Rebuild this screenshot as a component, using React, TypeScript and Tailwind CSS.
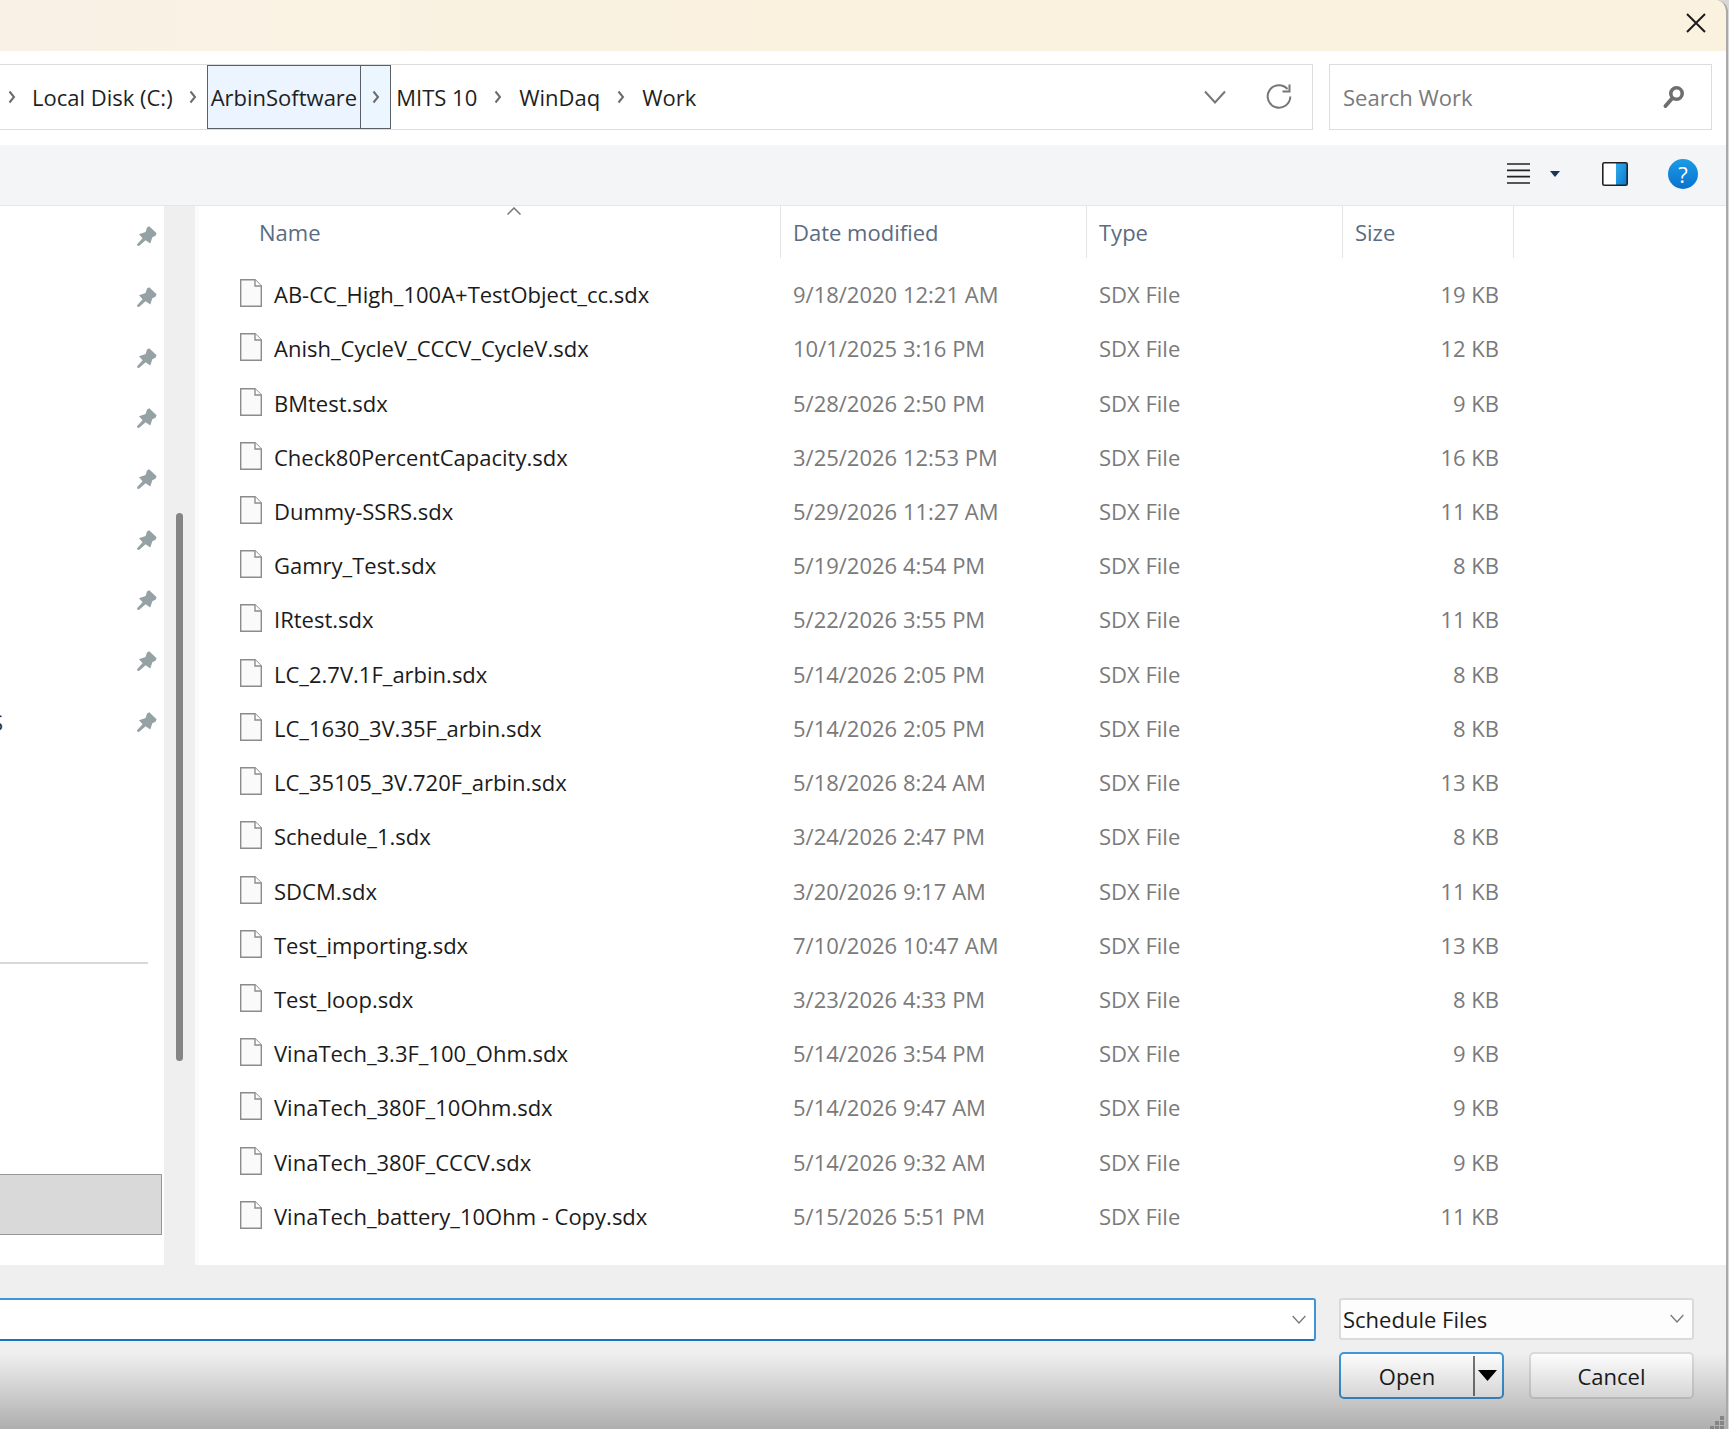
import { ReactNode } from "react";

type FileType = {
  name: string;
  date: string;
  size: string;
};

const files: FileType[] = [
  { name: "AB-CC_High_100A+TestObject_cc.sdx", date: "9/18/2020 12:21 AM", size: "19 KB" },
  { name: "Anish_CycleV_CCCV_CycleV.sdx", date: "10/1/2025 3:16 PM", size: "12 KB" },
  { name: "BMtest.sdx", date: "5/28/2026 2:50 PM", size: "9 KB" },
  { name: "Check80PercentCapacity.sdx", date: "3/25/2026 12:53 PM", size: "16 KB" },
  { name: "Dummy-SSRS.sdx", date: "5/29/2026 11:27 AM", size: "11 KB" },
  { name: "Gamry_Test.sdx", date: "5/19/2026 4:54 PM", size: "8 KB" },
  { name: "IRtest.sdx", date: "5/22/2026 3:55 PM", size: "11 KB" },
  { name: "LC_2.7V.1F_arbin.sdx", date: "5/14/2026 2:05 PM", size: "8 KB" },
  { name: "LC_1630_3V.35F_arbin.sdx", date: "5/14/2026 2:05 PM", size: "8 KB" },
  { name: "LC_35105_3V.720F_arbin.sdx", date: "5/18/2026 8:24 AM", size: "13 KB" },
  { name: "Schedule_1.sdx", date: "3/24/2026 2:47 PM", size: "8 KB" },
  { name: "SDCM.sdx", date: "3/20/2026 9:17 AM", size: "11 KB" },
  { name: "Test_importing.sdx", date: "7/10/2026 10:47 AM", size: "13 KB" },
  { name: "Test_loop.sdx", date: "3/23/2026 4:33 PM", size: "8 KB" },
  { name: "VinaTech_3.3F_100_Ohm.sdx", date: "5/14/2026 3:54 PM", size: "9 KB" },
  { name: "VinaTech_380F_10Ohm.sdx", date: "5/14/2026 9:47 AM", size: "9 KB" },
  { name: "VinaTech_380F_CCCV.sdx", date: "5/14/2026 9:32 AM", size: "9 KB" },
  { name: "VinaTech_battery_10Ohm - Copy.sdx", date: "5/15/2026 5:51 PM", size: "11 KB" },
];

const pins = ["", "", "", "", "", "", "", "", "S"];

const Chevron = () => (
  <svg width="8" height="14" viewBox="0 0 8 14" fill="none" stroke="#6b6b6b" strokeWidth="2">
    <path d="M1.5 1.5 6 7l-4.5 5.5" />
  </svg>
);

const ChevronDown = ({ className }: { className: string }) => (
  <svg className={className} viewBox="0 0 22 14" fill="none" stroke="#777" strokeWidth="2">
    <path d="M1 1.5 11 12.5 21 1.5" />
  </svg>
);

const PinIcon = () => (
  <svg width="20" height="20" viewBox="0 0 20 20" fill="#95a1a5">
    <path d="M12.2 0.3 19.6 7.3 18.5 9.8 15.3 11.2 13.3 17.6 8.6 14.2 2 20 0 19.6 0.3 18 5.6 12.2 2 8.3 8.6 6 10 1.5Z" />
  </svg>
);

const FileIcon = () => (
  <svg width="22" height="28" viewBox="0 0 22 28" className="mb-[2px] shrink-0" fill="#fafafa" stroke="#8c8c8c" strokeWidth="1.4">
    <path d="M0.7 0.7H15L21.3 7V27.3H0.7Z" />
    <path d="M15 0.7V7H21.3" fill="#fff" />
  </svg>
);

const Crumb = ({ children }: { children: ReactNode }) => (
  <a href="#" className="text-[#1f1f1f]">
    {children}
  </a>
);

const TitleBar = () => (
  <header className="flex h-[51px] items-center justify-end bg-linear-to-r from-[#f9f1e6] via-[#faf2e0] via-30% to-[#faf2df] pr-5">
    <button type="button" aria-label="Close" className="mb-[6px]">
      <svg width="20" height="20" viewBox="0 0 20 20" fill="none" stroke="#1b1b1b" strokeWidth="2">
        <path d="M1 1 19 19M19 1 1 19" />
      </svg>
    </button>
  </header>
);

const AddressBar = () => (
  <div className="flex h-[94px] gap-4 bg-white pt-[13px] pr-[14px] pb-[15px]">
    <nav aria-label="Address" className="flex min-w-0 flex-1 items-center border border-l-0 border-[#dcdcdc] pr-5">
      <div className="flex flex-1 items-center self-stretch whitespace-nowrap">
        <div className="flex items-center gap-4 pl-2">
          <Chevron />
          <Crumb>Local Disk (C:)</Crumb>
          <Chevron />
        </div>
        <div className="ml-[10px] flex self-stretch border border-[#5b6068] bg-[#ebf4ff]">
          <a href="#" className="flex items-center px-[3px] text-[#1f1f1f]">
            ArbinSoftware
          </a>
          <span className="flex w-[30px] items-center justify-center border-l border-[#5b6068] bg-[#ecf6ff]">
            <Chevron />
          </span>
        </div>
        <div className="flex items-center gap-[17px] pl-[5px]">
          <Crumb>MITS 10</Crumb>
          <Chevron />
          <Crumb>WinDaq</Crumb>
          <Chevron />
          <Crumb>Work</Crumb>
        </div>
      </div>
      <button type="button" aria-label="Previous locations">
        <ChevronDown className="h-[14px] w-[22px]" />
      </button>
      <button type="button" aria-label="Refresh" className="ml-10">
        <svg width="26" height="26" viewBox="0 0 26 26" fill="none" stroke="#777" strokeWidth="2">
          <path d="M21.5 5A11.3 11.3 0 1 0 24.3 12.5" />
          <path d="M23.5 0.5V7.5H16.5" />
        </svg>
      </button>
    </nav>
    <label className="flex w-[383px] items-center border border-[#dcdcdc] pr-[26px] pl-[13px]">
      <input
        type="text"
        aria-label="Search Work"
        placeholder="Search Work"
        className="min-w-0 flex-1 bg-transparent outline-none placeholder:text-[#7a7a7a]"
      />
      <svg width="22" height="22" viewBox="0 0 22 22" fill="none" stroke="#6e6e6e" strokeLinecap="round">
        <circle cx="13.5" cy="7.5" r="5.7" strokeWidth="3.6" />
        <path d="M9 12.5 2.5 20" strokeWidth="3.8" />
      </svg>
    </label>
  </div>
);

const Toolbar = () => (
  <div className="flex h-[61px] items-center justify-end border-b border-[#e4e7e9] bg-[#f3f5f7] pr-7 pb-[3px]">
    <button type="button" aria-label="Change view">
      <svg width="23" height="21" viewBox="0 0 23 21" stroke="#222" strokeWidth="1.7">
        <path d="M0 1H23M0 7.3H23M0 13.6H23M0 20H23" />
      </svg>
    </button>
    <button type="button" aria-label="More view options" className="ml-5">
      <svg width="10" height="6" viewBox="0 0 10 6" fill="#1c3358">
        <path d="M0 0H10L5 6Z" />
      </svg>
    </button>
    <button type="button" aria-label="Preview pane" className="ml-[42px]">
      <svg width="26" height="24" viewBox="0 0 26 24">
        <defs>
          <linearGradient id="pane" x1="0" y1="0" x2="1" y2="1">
            <stop offset="0" stopColor="#32ade8" />
            <stop offset="1" stopColor="#0a78d4" />
          </linearGradient>
        </defs>
        <rect x="0.8" y="0.8" width="24.4" height="22.4" rx="1.5" fill="#fff" />
        <rect x="14" y="1" width="11" height="22" fill="url(#pane)" />
        <rect x="0.8" y="0.8" width="24.4" height="22.4" rx="1.5" fill="none" stroke="#222" strokeWidth="1.6" />
      </svg>
    </button>
    <button
      type="button"
      aria-label="Help"
      className="ml-10 flex h-[30px] w-[30px] items-center justify-center rounded-full bg-linear-to-b from-[#1c9be4] to-[#0a72cf] text-white"
    >
      ?
    </button>
  </div>
);

const Sidebar = () => (
  <aside className="flex w-[195px] shrink-0 bg-[#efefef]">
    <div className="flex w-[164px] flex-col bg-white">
      <ul className="grid h-[546px] grid-rows-9">
        {pins.map((label, index) => (
          <li key={index} className="flex items-center justify-between overflow-hidden pr-[7px]">
            <span className="flex w-[3px] justify-end text-[#1c3358]">{label}</span>
            <PinIcon />
          </li>
        ))}
      </ul>
      <hr className="mt-[210px] mr-4 border-t-2 border-[#d8d8d8]" />
      <div className="mt-[210px] mr-[2px] h-[61px] border border-l-0 border-[#979797] bg-[#d9d9d9]" />
    </div>
    <div className="mt-[307px] ml-3 h-[548px] w-[7px] rounded-full bg-[#858585]" />
  </aside>
);

const Header = ({ children, className }: { children?: ReactNode; className: string }) => (
  <th scope="col" className="p-0 align-top font-normal">
    <div className={`flex h-[52px] items-center border-r border-[#e5e5e5] text-[#5b6b82] ${className}`}>
      {children}
    </div>
  </th>
);

const FileTable = () => (
  <div className="min-w-0 flex-1 border-l-4 border-[#fbfbfb] bg-white">
    <table className="h-[1037px] w-full table-fixed text-left whitespace-nowrap">
      <colgroup>
        <col className="w-[582px]" />
        <col className="w-[306px]" />
        <col className="w-[256px]" />
        <col className="w-[171px]" />
        <col />
      </colgroup>
      <thead className="h-[61px]">
        <tr className="h-[61px]">
          <Header className="relative pl-[60px]">
            Name
            <svg className="absolute top-[1px] left-[308px]" width="14" height="8" viewBox="0 0 14 8" fill="none" stroke="#777" strokeWidth="1.5">
              <path d="M0.5 7.5 7 1 13.5 7.5" />
            </svg>
          </Header>
          <Header className="pl-3">Date modified</Header>
          <Header className="pl-3">Type</Header>
          <Header className="pl-3">Size</Header>
          <td></td>
        </tr>
      </thead>
      <tbody className="text-[#7a7a7a]">
        {files.map((file) => (
          <tr key={file.name}>
            <td className="p-0 pl-[41px]">
              <div className="flex items-center gap-3 text-[#1b1b1b]">
                <FileIcon />
                {file.name}
              </div>
            </td>
            <td className="p-0 pl-3">{file.date}</td>
            <td className="p-0 pl-3">SDX File</td>
            <td className="p-0 pr-[15px] text-right">{file.size}</td>
            <td></td>
          </tr>
        ))}
      </tbody>
    </table>
  </div>
);

const Footer = () => (
  <footer className="relative flex h-[164px] gap-[23px] bg-[#efefef] pt-[33px] pr-8">
    <div className="flex h-[43px] min-w-0 flex-1 items-center rounded-r-[3px] border-2 border-l-0 border-[#3f95d6] border-b-[#1a75bd] bg-white pr-2">
      <input type="text" aria-label="File name" className="min-w-0 flex-1 outline-none" />
      <button type="button" aria-label="File name history">
        <ChevronDown className="h-[9px] w-[14px]" />
      </button>
    </div>
    <div className="flex w-[355px] flex-col gap-3">
      <div className="relative flex">
        <select
          aria-label="File type"
          className="h-[42px] w-full appearance-none rounded-[3px] border-2 border-[#dadada] bg-[#fdfdfd] pl-[2px] text-[#1b1b1b]"
        >
          <option>Schedule Files</option>
        </select>
        <ChevronDown className="pointer-events-none absolute top-4 right-[10px] h-[9px] w-[14px]" />
      </div>
      <div className="flex justify-between">
        <div className="flex h-[47px] w-[165px] items-center rounded-[5px] border-2 border-[#3f95d6] bg-[#fdfdfd]">
          <button type="button" className="flex-1 text-[#1b1b1b]">
            Open
          </button>
          <button type="button" aria-label="Open options" className="flex h-10 w-[29px] items-center border-l-2 border-[#777] pl-[3px]">
            <svg width="19" height="11" viewBox="0 0 19 11">
              <path d="M0 0H19L9.5 11Z" />
            </svg>
          </button>
        </div>
        <button type="button" className="h-[47px] w-[165px] rounded-[5px] border-2 border-[#dadada] bg-[#fdfdfd] text-[#1b1b1b]">
          Cancel
        </button>
      </div>
    </div>
    <div className="pointer-events-none absolute inset-x-0 bottom-0 h-[76px] bg-linear-to-b from-black/0 to-black/27" />
    <svg className="absolute right-0 bottom-0" width="16" height="14" fill="#858585">
      <path d="M10 1h4v4h-4zM5 6h4v4h-4zM10 6h4v4h-4zM0 11h4v3h-4zM5 11h4v3h-4zM10 11h4v3h-4z" />
    </svg>
  </footer>
);

const App = () => {
  return (
    <div className="min-h-screen bg-[#d9d6d3] font-['Open_Sans','Noto_Sans',sans-serif] text-[22px] leading-[30px]">
      <div className="mr-[1px] flex min-h-screen flex-col overflow-hidden rounded-tr-[12px] border-r-2 border-[#a9a9a9]">
        <TitleBar />
        <AddressBar />
        <Toolbar />
        <main className="flex flex-1">
          <Sidebar />
          <FileTable />
        </main>
        <Footer />
      </div>
    </div>
  );
};

export default App;
